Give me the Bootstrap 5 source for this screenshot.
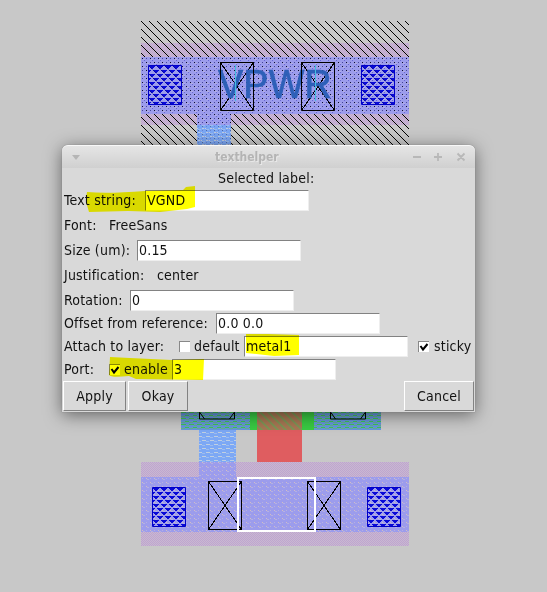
<!DOCTYPE html>
<html lang="en">
<head>
<meta charset="utf-8">
<meta name="viewport" content="width=device-width, initial-scale=1">
<title>texthelper</title>
<link href="https://cdn.jsdelivr.net/npm/bootstrap@5.3.0/dist/css/bootstrap.min.css" rel="stylesheet">
<style>
body{background:#c8c8c8;width:547px;height:592px;overflow:hidden;font-family:"DejaVu Sans Condensed","DejaVu Sans",sans-serif;font-stretch:condensed;font-size:14px;letter-spacing:.2px;line-height:20px;color:#111}
.layout-canvas{width:547px;height:592px}
.dialog-window{left:62px;top:145px;width:413px;height:267px;background:#d9d9d9;border-radius:6px 6px 0 0;box-shadow:0 0 1px #666,0 3px 17px rgba(0,0,0,.5)}
.title-strip{height:23px;border-radius:6px 6px 0 0;background:linear-gradient(#e5e5e5,#d0d0d0);border-top:1px solid #f8f8f8;color:#b4b4b4;font-weight:bold;font-size:12px;letter-spacing:0;text-shadow:1px 1px 0 #e8e8e8}
.title-strip svg{display:block}
.form-line{height:23px;padding-left:2px;white-space:nowrap}
.form-line>span:not(.tk-check),.heading-line span{padding-bottom:1px}
.form-line.tall{height:27px}
.form-line.tall>span{padding-bottom:2px}
.heading-line{height:21px;padding-left:156px}
.tk-entry{width:164px;height:21px;background:#fff;border:0;border-top:1px solid #828282;border-left:1px solid #828282;border-right:1px solid #eee;border-bottom:1px solid #eee;padding:0 0 0 1px;line-height:19px}
.tk-check{width:11px;height:11px;background:#fff;border-top:1px solid #888;border-left:1px solid #888}
.tk-check svg{display:block}
.sticky-check{margin-left:10px;margin-right:5px}
.tk-button{height:30px;border:1px solid;border-color:#fff #828282 #828282 #fff;border-radius:0;background:#d9d9d9;padding:0;font-size:inherit;letter-spacing:inherit;line-height:27px;color:#111}
.button-line{padding:0 1px}
.w-text{width:81px}.w-font{width:45px}.w-size{width:73px}.w-just{width:93px}.w-rot{width:66px}.w-off{width:152px}.w-att{width:115px}.w-port{width:45px}
.w-def{width:50px}.w-en{width:48px}
.w-apply{width:63px;margin-right:2px}.w-okay{width:60px}.w-cancel{width:70px}
.marker-layer{left:0;top:0;mix-blend-mode:multiply;pointer-events:none}
</style>
<script src="https://cdn.jsdelivr.net/npm/bootstrap@5.3.0/dist/js/bootstrap.bundle.min.js"></script>
</head>
<body class="position-relative m-0">
<svg class="layout-canvas d-block" viewBox="0 0 547 592">
<defs>
<pattern id="hatch" x="141" y="21" width="8" height="8" patternUnits="userSpaceOnUse"><path d="M0 0h1v1h1v1h1v1h1v1h1v1h1v1h1v1h1v1h-1v-1h-1v-1h-1v-1h-1v-1h-1v-1h-1v-1h-1v-1h-1z" fill="#000"/></pattern>
<pattern id="well" width="2" height="2" patternUnits="userSpaceOnUse"><path d="M0 0h2v2h-2z" fill="#c9b9d0"/><path d="M0 0h1v1h-1zM1 1h1v1h-1z" fill="#bea4d0"/></pattern>
<pattern id="metal" x="141" y="57" width="8" height="8" patternUnits="userSpaceOnUse"><path d="M0 0h8v8h-8z" fill="#9c9cec"/><path d="M1 1h1v1h-1zM5 5h1v1h-1z" fill="#d3bec0"/><path d="M2 2h2v1h-2zM6 6h2v1h-2zM5 1h1v1h-1zM1 5h1v1h-1z" fill="#b6b1df"/></pattern>
<pattern id="dots" x="141" y="57" width="8" height="8" patternUnits="userSpaceOnUse"><path d="M1 1h1v1h-1zM5 5h1v1h-1z" fill="#10102a"/><path d="M5 1h1v1h-1zM1 5h1v1h-1z" fill="#4a4a9a"/><path d="M3 3h1v1h-1zM7 7h1v1h-1z" fill="#6565d8"/></pattern>
<pattern id="local" x="197" y="115" width="8" height="8" patternUnits="userSpaceOnUse"><path d="M0 0h8v8h-8z" fill="#7ca8f5"/><path d="M1 1h4v1h-4zM5 5h3v1h-3zM0 5h1v1h-1z" fill="#bfcfe2"/><path d="M5 2h3v1h-3zM1 6h3v1h-3z" fill="#9cbcef"/></pattern>
<pattern id="localgreen" x="181" y="412" width="8" height="6" patternUnits="userSpaceOnUse"><path d="M0 0h8v6h-8z" fill="#6797dc"/><path d="M0 0h5v1h-5zM4 3h4v1h-4z" fill="#3ecb50"/><path d="M5 1h3v1h-3zM0 4h4v1h-4z" fill="#62b68c"/></pattern>
<pattern id="gate" width="8" height="8" patternUnits="userSpaceOnUse"><path d="M0 0h8v8h-8z" fill="#a87854"/><path d="M0 0l8 8M-4 4l8 8M4 -4l8 8" stroke="#7b9855" stroke-width="1.7"/></pattern>
<pattern id="contact" width="8" height="8" patternUnits="userSpaceOnUse"><path d="M1 1h6v1h-1v1h-1v1h-2v-1h-1v-1h-1zM-3 5h6v1h-1v1h-1v1h-2v-1h-1v-1h-1zM5 5h6v1h-1v1h-1v1h-2v-1h-1v-1h-1z" fill="#0909d7"/></pattern>
</defs>
<path d="M141 43h268v82h-268z" fill="url(#well)"/>
<path d="M141 21h268v36h-268zM141 114h56v31h-56zM231 114h178v31h-178z" fill="url(#hatch)"/>
<path d="M141 57h268v57h-268z" fill="url(#metal)"/>
<path d="M197 114h34v11h-34z" fill="url(#metal)"/>
<path d="M141 57h268v57h-268zM197 114h34v11h-34z" fill="url(#dots)"/>
<path d="M197 125h34v25h-34z" fill="url(#local)"/>
<path d="M197 125h34v20h-34z" fill="url(#dots)" opacity=".4"/>
<g transform="translate(148 65)"><path d="M0 0h33v39h-33z" fill="url(#contact)"/><path d="M0 0h33v39h-33z" fill="url(#hatch)" opacity=".22"/><path d="M.5 .5h33v39h-33z" fill="none" stroke="#0000c8"/></g>
<g transform="translate(361 65)"><path d="M0 0h33v39h-33z" fill="url(#contact)"/><path d="M0 0h33v39h-33z" fill="url(#hatch)" opacity=".22"/><path d="M.5 .5h33v39h-33z" fill="none" stroke="#0000c8"/></g>
<path d="M220.500 62.500l33 48m0-48l-33 48M301.500 62.500l33 48m0-48l-33 48" fill="none" stroke="#000" shape-rendering="crispEdges"/>
<text x="218" y="98" font-family="Liberation Sans" font-size="41" textLength="114" lengthAdjust="spacingAndGlyphs" fill="#2e60b8" stroke="#2e60b8" stroke-width=".7">VPWR</text>
<path d="M235.500 65v36M315.500 65v36" stroke="#45bedf"/>
<path d="M220.500 62.500h33v48h-33zM301.500 62.500h33v48h-33z" fill="none" stroke="#000"/>
<path d="M181 412h200v18h-200z" fill="#39cb43"/>
<path d="M181 412h69v18h-69zM314 412h67v18h-67z" fill="url(#localgreen)"/>
<path d="M257 412h45v18h-45z" fill="url(#gate)"/>
<path d="M257 430h45v32h-45z" fill="#df5d60"/>
<path d="M199.500 405v14h35v-14M330.500 405v14h35v-14M199.500 419M199.500 412l5 7M234.500 412l-5 7M330.500 412l5 7M365.500 412l-5 7" fill="none" stroke="#000"/>
<path d="M141 462h268v84h-268z" fill="url(#well)"/>
<path d="M141 477h268v55h-268zM199 462h37v15h-37z" fill="url(#metal)"/>
<path d="M199 430h37v32h-37z" fill="url(#local)"/>
<g transform="translate(152 487)"><path d="M0 0h33v39h-33z" fill="url(#contact)"/><path d="M.5 .5h33v39h-33z" fill="none" stroke="#0000c8"/></g>
<g transform="translate(367 487)"><path d="M0 0h33v39h-33z" fill="url(#contact)"/><path d="M.5 .5h33v39h-33z" fill="none" stroke="#0000c8"/></g>
<g fill="none" stroke="#000" shape-rendering="crispEdges"><path d="M208.500 481.500h33v48h-33zl33 48m0-48l-33 48M307.500 481.500h33v48h-33zl33 48m0-48l-33 48"/></g>
<path d="M238 478h77v53h-77z" fill="none" stroke="#fff" stroke-width="2"/>
</svg>
<main class="dialog-window position-absolute">
<header class="title-strip d-flex align-items-center">
<svg width="153" height="22"><path d="M10 9h8l-4 5z" fill="#b5b5b5"/></svg><span>texthelper</span>
<svg class="ms-auto" width="70" height="22"><path d="M8 11h8M29 11h8M33 7v8M52.500 7.500l7 7M59.500 7.500l-7 7" stroke="#b8b8b8" stroke-width="1.8" fill="none"/></svg>
</header>
<div class="heading-line d-flex align-items-center"><span>Selected label:</span></div>
<div class="form-line d-flex align-items-center"><span class="w-text">Text string:</span><div class="tk-entry">VGND</div></div>
<div class="form-line tall d-flex align-items-center"><span class="w-font">Font:</span><span>FreeSans</span></div>
<div class="form-line d-flex align-items-center"><span class="w-size">Size (um):</span><div class="tk-entry">0.15</div></div>
<div class="form-line tall d-flex align-items-center"><span class="w-just">Justification:</span><span>center</span></div>
<div class="form-line d-flex align-items-center"><span class="w-rot">Rotation:</span><div class="tk-entry">0</div></div>
<div class="form-line d-flex align-items-center"><span class="w-off">Offset from reference:</span><div class="tk-entry">0.0 0.0</div></div>
<div class="form-line d-flex align-items-center"><span class="w-att">Attach to layer:</span><span class="tk-check me-1"></span><span class="w-def">default</span><div class="tk-entry">metal1</div><span class="tk-check sticky-check"><svg width="10" height="10"><path d="M1.500 4l2.500 3.500l4.500-5.500" stroke="#000" stroke-width="2" fill="none"/></svg></span><span>sticky</span></div>
<div class="form-line d-flex align-items-center"><span class="w-port">Port:</span><span class="tk-check me-1"><svg width="10" height="10"><path d="M1.500 4l2.500 3.500l4.500-5.500" stroke="#000" stroke-width="2" fill="none"/></svg></span><span class="w-en">enable</span><div class="tk-entry">3</div></div>
<div class="d-flex button-line"><button class="tk-button w-apply">Apply</button><button class="tk-button w-okay">Okay</button><button class="tk-button w-cancel ms-auto">Cancel</button></div>
</main>
<svg class="marker-layer position-absolute" width="547" height="592"><g fill="#ff0"><path d="M87 192q20 2 58-1l38-1 3-3 9-1v21l-8 2-27 3-32-1-39 1q-4-10-2-20z"/><path d="M246 334l22 0 31 1v20l-25 1-28-3z"/><path d="M110 357l20 1 42 2 32-1-1 21-67-1-7-3q-18 2-20-1z"/></g></svg>
</body>
</html>
